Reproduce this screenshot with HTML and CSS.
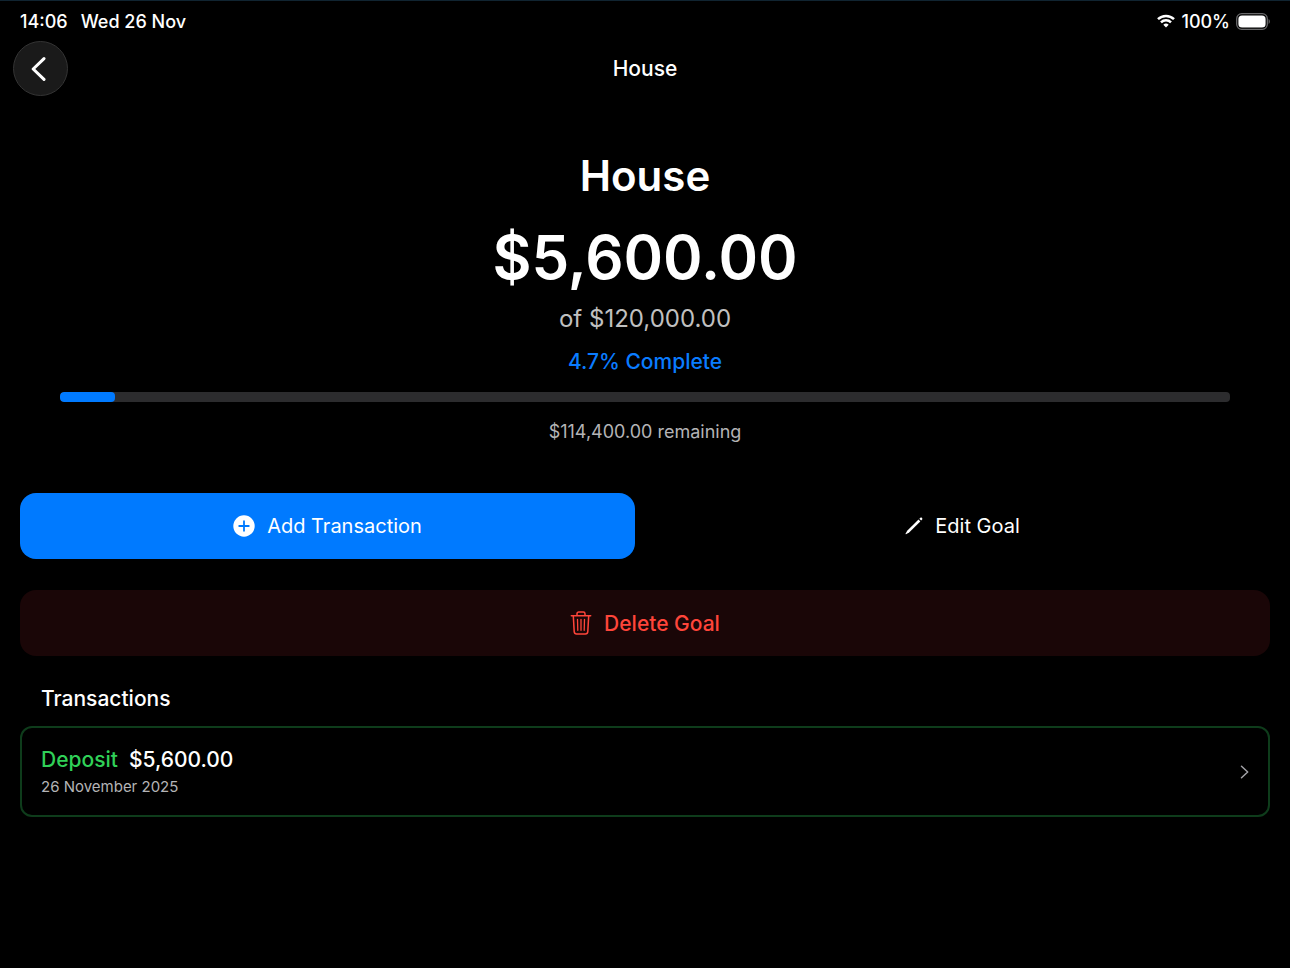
FILE: index.html
```
<!DOCTYPE html>
<html lang="en">
<head>
    <meta charset="UTF-8">
    <meta name="viewport" content="width=device-width, initial-scale=1.0">
    <title>House</title>
    <link rel="stylesheet" href="styles.css">
</head>
<body>
    <div class="statusbar">
        <div class="status-left">
            <span>14:06</span>
            <span>Wed 26 Nov</span>
        </div>
        <div class="status-right">
            <svg class="wifi" width="18" height="14" viewBox="0 0 18 14" fill="none" stroke="#fff" stroke-width="2.5">
                <path d="M1 5.2a11.4 11.4 0 0 1 16 0"/>
                <path d="M4 8.4a7.1 7.1 0 0 1 10 0"/>
                <path d="M9 13.4 6.3 10.7a3.9 3.9 0 0 1 5.4 0z" fill="#fff" stroke="none"/>
            </svg>
            <span>100%</span>
            <svg class="battery" width="34" height="17" viewBox="0 0 34 17">
                <rect x="0.7" y="0.7" width="30.6" height="15.6" rx="5" fill="none" stroke="#68686a" stroke-width="1.3"/>
                <rect x="2.4" y="2.4" width="27.2" height="12.2" rx="3.6" fill="#fff"/>
                <path d="M32.6 6v5c1.6-.7 1.6-4.3 0-5z" fill="#68686a"/>
            </svg>
        </div>
    </div>

    <header class="navbar">
        <button class="back" aria-label="Back">
            <svg width="16" height="24" viewBox="0 0 16 24" fill="none" stroke="#fff" stroke-width="3" stroke-linecap="round" stroke-linejoin="round">
                <path d="M13 1.6 2.2 12 13 22.400"/>
            </svg>
        </button>
        <h2 class="nav-title">House</h2>
    </header>

    <main>
        <section class="summary">
            <h1>House</h1>
            <p class="amount">$5,600.00</p>
            <p class="target">of $120,000.00</p>
            <p class="percent">4.7% Complete</p>
            <div class="progress" role="progressbar" aria-valuenow="4.7" aria-valuemin="0" aria-valuemax="100" aria-label="4.7% Complete">
                <div class="progress-fill" style="width: 4.7%"></div>
            </div>
            <p class="remaining">$114,400.00 remaining</p>
        </section>

        <div class="actions">
            <button class="btn btn-add">
                <svg width="22" height="22" viewBox="0 0 22 22">
                    <circle cx="11" cy="11" r="10.7" fill="#fff"/>
                    <path d="M11 6.2v9.6M6.2 11h9.6" stroke="#007aff" stroke-width="1.8" stroke-linecap="round"/>
                </svg>
                Add Transaction
            </button>
            <button class="btn btn-edit">
                <svg width="18" height="18" viewBox="0 0 18 18" fill="#fff">
                    <path d="M13.5 2.600 15.300 4.400 4.100 15.600 1 17.200c-.3.1-.6-.2-.5-.5L2.200 13.700z"/>
                    <path d="M14.300 1.800 15.200.9c.6-.6 1.300-.5 1.800 0s.6 1.200 0 1.800l-.9.9z"/>
                </svg>
                Edit Goal
            </button>
            <button class="btn btn-delete">
                <svg width="22" height="24" viewBox="0 0 22 24" fill="none" stroke="#ff453a" stroke-width="1.5" stroke-linecap="round" stroke-linejoin="round">
                    <path d="M1.3 4.7h19.4M7 4.5V2.7C7 1.7 7.7 1 8.700 1h4.600c1 0 1.700.7 1.700 1.700v1.800"/>
                    <path d="m3.300 4.900.9 15.700c.1 1.400 1 2.300 2.400 2.300h8.800c1.400 0 2.300-.9 2.400-2.300l.9-15.700"/>
                    <path d="m7.500 8.300.3 11M11 8.300v11M14.500 8.300l-.3 11" stroke-width="1.3"/>
                </svg>
                Delete Goal
            </button>
        </div>

        <section class="transactions">
            <h3>Transactions</h3>
            <a href="#" class="transaction">
                <div>
                    <p class="transaction-title"><span class="deposit">Deposit</span> <span>$5,600.00</span></p>
                    <p class="transaction-date">26 November 2025</p>
                </div>
                <svg width="9" height="14" viewBox="0 0 9 14" fill="none" stroke="#a2a2a7" stroke-width="1.5" stroke-linecap="round" stroke-linejoin="round">
                    <path d="m1.500 1.200 6.200 5.800-6.200 5.800"/>
                </svg>
            </a>
        </section>
    </main>
</body>
</html>
```
FILE: styles.css
```
* {
    box-sizing: border-box;
}
body {
    margin: 0;
    min-height: 100vh;
    background-color: #000;
    border-top: 1px solid #102431;
    color: #fff;
    font-family: Inter, "Liberation Sans", sans-serif;
}
h1, h2, h3, p {
    margin: 0;
}

/* Status bar */
.statusbar {
    display: flex;
    justify-content: space-between;
    align-items: center;
    height: 40px;
    padding: 0 20px;
    font-size: 18px;
    font-weight: 500;
}
.status-left {
    display: flex;
    gap: 13px;
}
.status-right {
    display: flex;
    align-items: center;
    gap: 6px;
}

/* Navigation bar */
.navbar {
    display: grid;
    grid-template-columns: 1fr auto 1fr;
    align-items: center;
    padding: 0 13px;
}
.back {
    display: flex;
    align-items: center;
    justify-content: center;
    width: 55px;
    height: 55px;
    padding: 0 4px 0 0;
    border: 1px solid #343434;
    border-radius: 50%;
    background-color: #1a1a1a;
}
.nav-title {
    font-size: 21px;
    font-weight: 500;
}

main {
    padding: 54px 20px 20px;
}

/* Goal summary */
.summary {
    padding: 0 40px;
    text-align: center;
}
h1 {
    font-size: 42px;
    line-height: 52px;
    font-weight: 600;
}
.amount {
    margin-top: 19px;
    font-size: 60px;
    line-height: 72px;
    font-weight: 600;
}
.target {
    margin-top: 10px;
    color: #c0c0c0;
    font-size: 24px;
    line-height: 32px;
}
.percent {
    margin-top: 13px;
    color: #0a7cff;
    font-size: 21px;
    line-height: 28px;
    font-weight: 500;
}
.progress {
    height: 10px;
    margin-top: 16px;
    border-radius: 4px;
    background-color: #2c2c2e;
    overflow: hidden;
}
.progress-fill {
    height: 100%;
    border-radius: 4px;
    background-color: #007aff;
}
.remaining {
    margin-top: 18px;
    color: #b4b4b6;
    font-size: 18px;
    line-height: 24px;
}

/* Buttons */
.actions {
    display: grid;
    grid-template-columns: 1fr 1fr;
    gap: 31px 20px;
    margin-top: 49px;
}
.btn {
    display: flex;
    align-items: center;
    justify-content: center;
    gap: 12px;
    height: 66px;
    border: none;
    border-radius: 16px;
    background-color: transparent;
    color: #fff;
    font-family: inherit;
    font-size: 20px;
    cursor: pointer;
}
.btn-add {
    background-color: #007aff;
}
.btn-delete {
    grid-column: 1 / 3;
    background-color: #1a0607;
    color: #ff453a;
    font-size: 21px;
    font-weight: 500;
}

/* Transactions */
.transactions {
    margin-top: 29px;
}
.transactions h3 {
    padding: 0 21px;
    font-size: 21px;
    line-height: 28px;
    font-weight: 500;
}
.transaction {
    display: flex;
    justify-content: space-between;
    align-items: center;
    margin-top: 13px;
    padding: 18px 19px;
    border: 2px solid #0e3c1b;
    border-radius: 12px;
    color: #fff;
    text-decoration: none;
}
.transaction-title {
    display: flex;
    gap: 11px;
    font-size: 21px;
    line-height: 28px;
    font-weight: 500;
}
.deposit {
    color: #30d158;
}
.transaction-date {
    margin-top: 3px;
    color: #b4b4b6;
    font-size: 15px;
    line-height: 20px;
}
```
